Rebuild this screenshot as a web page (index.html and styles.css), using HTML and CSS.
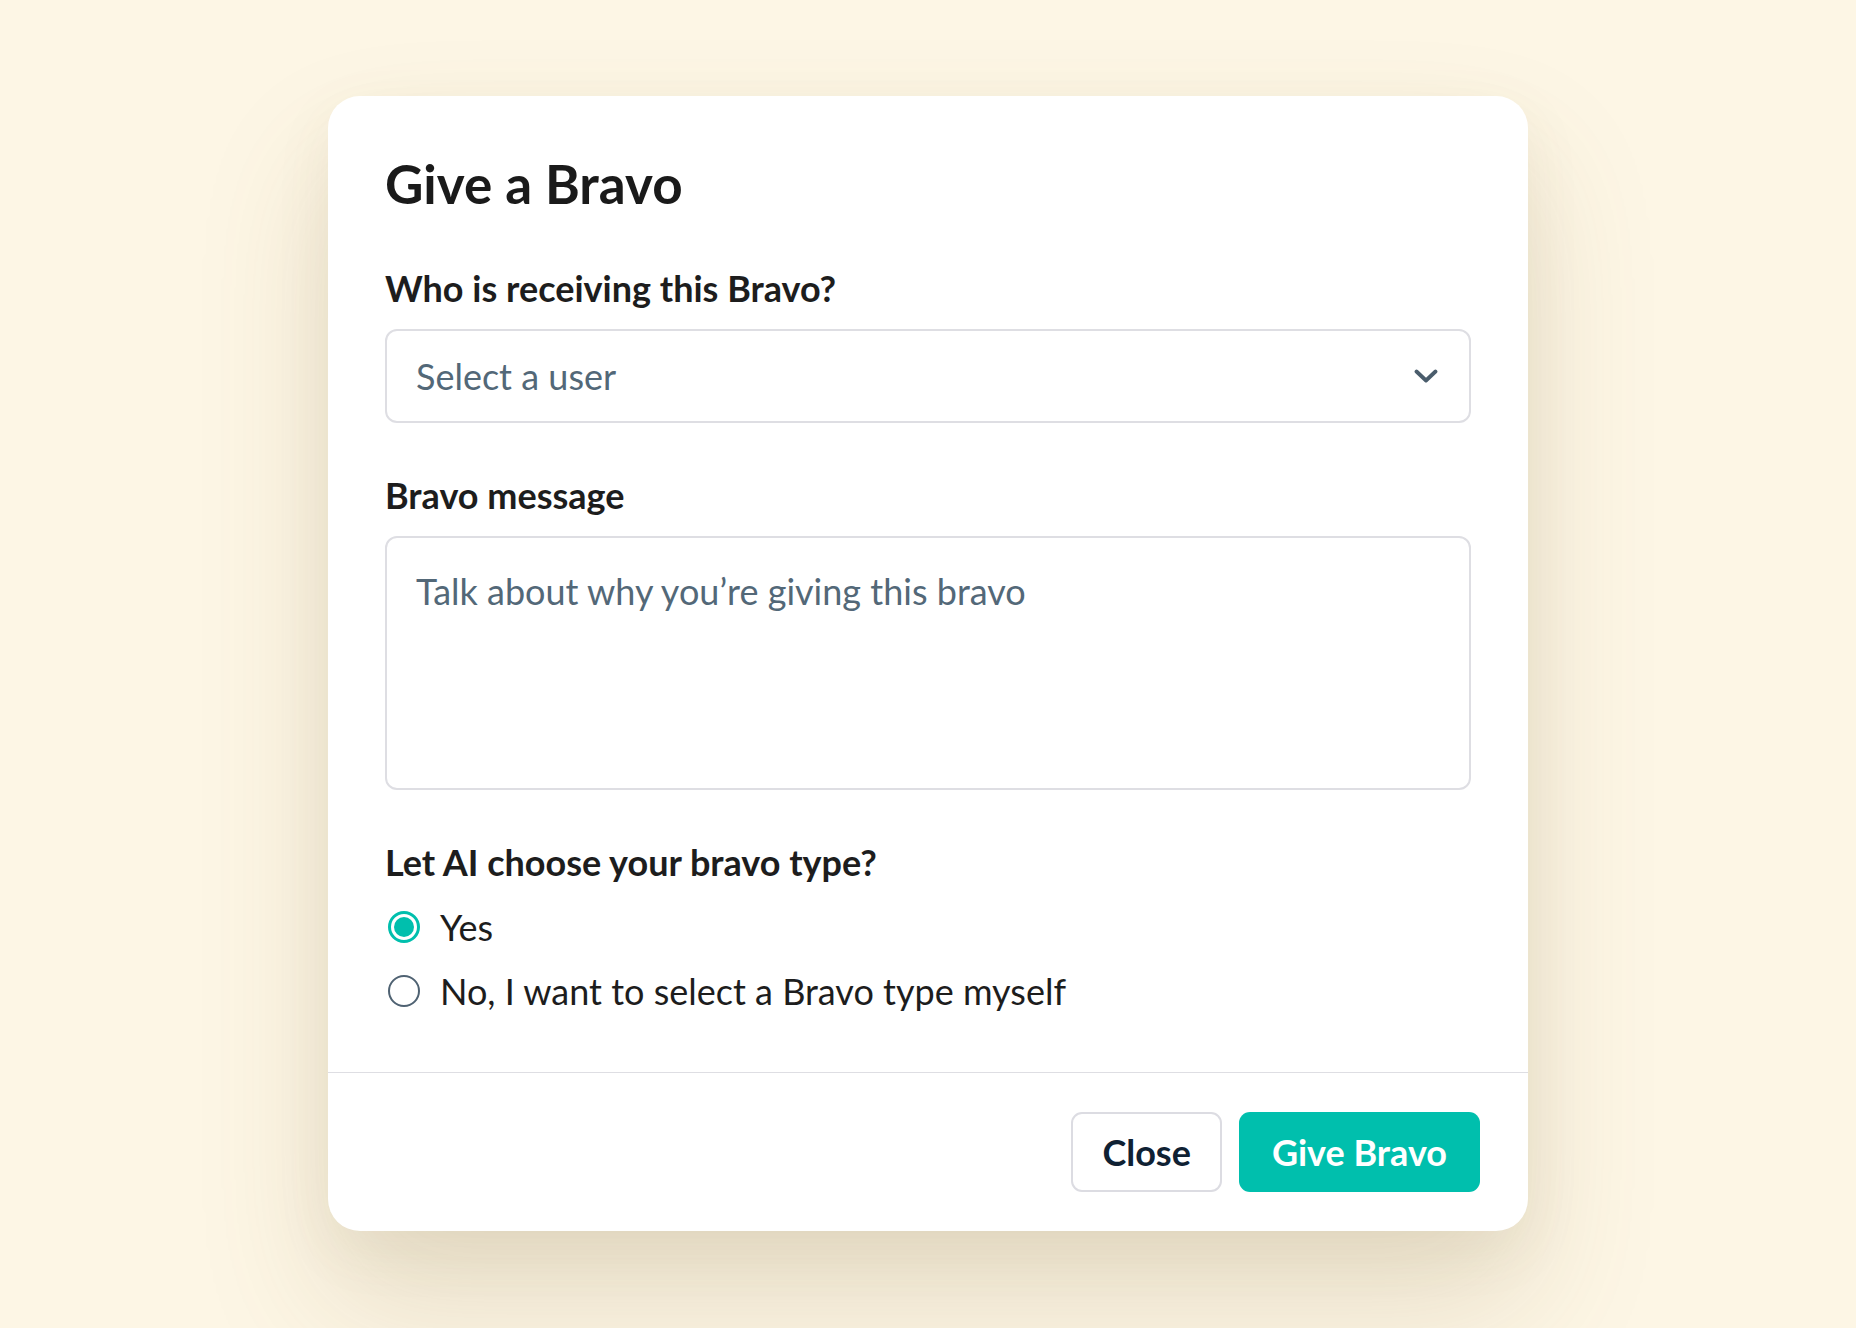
FILE: index.html
```html
<!DOCTYPE html>
<html lang="en">
<head>
<meta charset="utf-8">
<title>Give a Bravo</title>
<link rel="stylesheet" href="styles.css">
</head>
<body>
<div class="page">
  <div class="modal">
    <div class="modal-body">
      <h1 class="title">Give a Bravo</h1>

      <div class="field field-first">
        <div class="field-label">Who is receiving this Bravo?</div>
        <div class="select">
          <span class="placeholder">Select a user</span>
          <svg class="chevron" width="24" height="14" viewBox="0 0 24 14" aria-hidden="true">
            <path d="M2.5 2.5 L12 11.5 L21.5 2.5" fill="none" stroke="#4a5d6c" stroke-width="3.8" stroke-linecap="round" stroke-linejoin="round"/>
          </svg>
        </div>
      </div>

      <div class="field">
        <div class="field-label">Bravo message</div>
        <div class="textarea">
          <span class="placeholder">Talk about why you’re giving this bravo</span>
        </div>
      </div>

      <div class="field">
        <div class="field-label">Let AI choose your bravo type?</div>
        <div class="radios">
          <div class="radio-row">
            <span class="radio radio-checked"><span class="radio-dot"></span></span>
            <span class="radio-text">Yes</span>
          </div>
          <div class="radio-row">
            <span class="radio"></span>
            <span class="radio-text">No, I want to select a Bravo type myself</span>
          </div>
        </div>
      </div>
    </div>

    <div class="modal-footer">
      <button class="btn btn-secondary" type="button">Close</button>
      <button class="btn btn-primary" type="button">Give Bravo</button>
    </div>
  </div>
</div>
</body>
</html>
```

FILE: styles.css
```css
* {
  box-sizing: border-box;
}

html, body {
  margin: 0;
  padding: 0;
}

body {
  background: #fdf6e5;
  font-family: Lato, "Noto Sans", "Liberation Sans", sans-serif;
  color: #1d1d1d;
  min-height: 1328px;
}

.page {
  display: flex;
  justify-content: center;
  padding-top: 96px;
}

.modal {
  width: 1200px;
  background: #ffffff;
  border-radius: 32px;
  box-shadow: 0 70px 130px rgba(120, 95, 50, 0.17), 0 20px 60px rgba(120, 95, 50, 0.07);
}

.modal-body {
  padding: 56px 57px 57px 57px;
}

.title {
  margin: 0;
  font-size: 53px;
  line-height: 64px;
  font-weight: 700;
  color: #1a1a1a;
}

.field {
  display: flex;
  flex-direction: column;
  margin-top: 50px;
}

.field-label {
  font-size: 36px;
  line-height: 44px;
  font-weight: 700;
  color: #1d1d1d;
  margin-bottom: 19px;
}

.placeholder {
  font-size: 36px;
  line-height: 48px;
  color: #536878;
}

.select {
  height: 94px;
  border: 2px solid #dedee3;
  border-radius: 12px;
  display: flex;
  align-items: center;
  justify-content: space-between;
  padding: 0 31px 0 29px;
}

.chevron {
  display: block;
}

.textarea {
  height: 254px;
  border: 2px solid #dedee3;
  border-radius: 12px;
  padding: 29px 29px;
}

.radios {
  display: flex;
  flex-direction: column;
  gap: 16px;
}

.radio-row {
  display: flex;
  align-items: center;
  height: 48px;
}

.radio {
  width: 32px;
  height: 32px;
  border-radius: 50%;
  border: 2px solid #4f6272;
  margin-left: 3px;
  margin-right: 20px;
  display: flex;
  align-items: center;
  justify-content: center;
  flex-shrink: 0;
}

.radio-checked {
  border: 3px solid #00bfad;
}

.radio-dot {
  width: 20px;
  height: 20px;
  border-radius: 50%;
  background: #00bfad;
}

.radio-text {
  font-size: 36px;
  line-height: 48px;
  color: #1d1d1d;
}

.modal-footer {
  border-top: 1px solid #dedee3;
  padding: 39px 48px 39px 48px;
  display: flex;
  justify-content: flex-end;
  gap: 17px;
}

.btn {
  height: 80px;
  padding: 0 33px;
  border-radius: 11px;
  font-family: Lato, "Noto Sans", "Liberation Sans", sans-serif;
  font-size: 36px;
  font-weight: 700;
  line-height: 1;
  cursor: pointer;
}

.btn-secondary {
  padding: 0 29px;
  background: #ffffff;
  border: 2px solid #dcdce2;
  color: #0f2133;
}

.btn-primary {
  background: #00bfad;
  border: none;
  color: #ffffff;
}
```
